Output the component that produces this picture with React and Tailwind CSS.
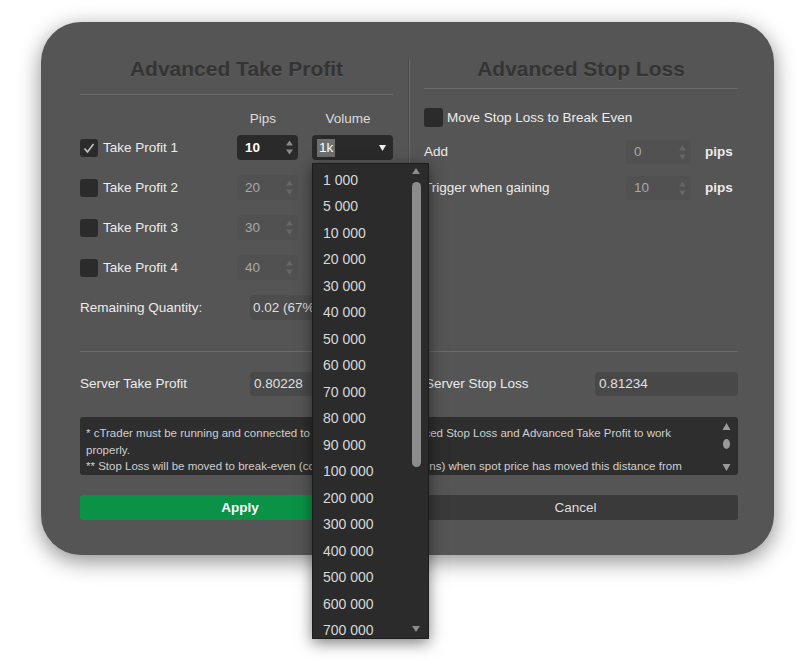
const volumes = [
  "1 000", "5 000", "10 000", "20 000", "30 000", "40 000", "50 000", "60 000", "70 000",
  "80 000", "90 000", "100 000", "200 000", "300 000", "400 000", "500 000", "600 000", "700 000",
]

function Check({ checked, size = 18 }) {
  return (
    <div className="shrink-0 rounded-[3px] bg-[#2b2b2b] flex items-center justify-center"
         style={{ width: size, height: size }}>
      {checked && (
        <svg width="12" height="12" viewBox="0 0 12 12">
          <polyline points="1.5,6.5 4.5,10 10.5,2" fill="none" stroke="#c4c4c4" strokeWidth="1.6" />
        </svg>
      )}
    </div>
  )
}

function Spinner({ color }) {
  return (
    <svg width="7" height="15" viewBox="0 0 7 15" className="shrink-0">
      <polygon points="0,5.5 3.5,0.5 7,5.5" fill={color} />
      <polygon points="0,9.5 3.5,14.5 7,9.5" fill={color} />
    </svg>
  )
}

function NumBox({ value, active, width = "w-[61px]", height = "h-[25px]" }) {
  return (
    <div className={`${width} ${height} rounded-[4px] flex items-center justify-between pl-[8px] pr-[5px] ` +
                    (active ? "bg-[#2a2a2a] text-white font-bold" : "bg-[#515151] text-[#a8a8a8]")}>
      <span className="pt-[1px]">{value}</span>
      <Spinner color={active ? "#8a8a8a" : "#666666"} />
    </div>
  )
}

function TpRow({ n, pips, checked }) {
  return (
    <div className="h-[25px] flex items-center">
      <Check checked={checked} />
      <span className="ml-[5px] pt-[2px] flex-1 text-[#ececec]">Take Profit {n}</span>
      <NumBox value={pips} active={checked} />
      <div className={"ml-[14px] w-[81px] h-[25px] rounded-[4px] flex items-center justify-between pl-[5px] pr-[7px] " +
                      (checked ? "bg-[#2a2a2a]" : "bg-[#515151]")}>
        {checked && (
          <>
            <span className="bg-[#6e6e6e] text-white px-[2px] leading-[18px]">1k</span>
            <svg width="7" height="6" viewBox="0 0 7 6"><polygon points="0,0 7,0 3.5,6" fill="#f0f0f0" /></svg>
          </>
        )}
      </div>
    </div>
  )
}

function Title({ children }) {
  return (
    <div className="h-[24px] leading-[24px] text-center text-[21px] font-bold text-[#343434] [text-shadow:0_1px_0_rgba(255,255,255,0.08)]">
      {children}
    </div>
  )
}

export default function App() {
  return (
    <div className="relative w-[812px] h-[661px] overflow-hidden bg-white pt-[22px] pl-[41px] text-[13.5px] font-['Liberation_Sans',Arial,sans-serif]">
      <div className="w-[733px] h-[533px] rounded-[40px] bg-[#555555] shadow-[0_6px_22px_rgba(0,0,0,0.45)] pl-[39px] pr-[36px] flex flex-col">
        <div className="flex h-[329px]">
          {/* left: take profit */}
          <div className="w-[313px] pt-[35px] flex flex-col">
            <Title>Advanced Take Profit</Title>
            <div className="mt-[13px] h-px bg-[#6a6a6a]" />
            <div className="mt-[17px] h-[14px] flex items-center text-[#dcdcdc]">
              <div className="flex-1" />
              <div className="w-[61px] pr-[9px] text-center">Pips</div>
              <div className="ml-[14px] w-[81px] pr-[9px] text-center">Volume</div>
            </div>
            <div className="mt-[9px] flex flex-col gap-[15px]">
              <TpRow n={1} pips="10" checked />
              <TpRow n={2} pips="20" />
              <TpRow n={3} pips="30" />
              <TpRow n={4} pips="40" />
              <div className="h-[25px] flex items-center">
                <span className="flex-1 pt-[2px] text-[#ececec]">Remaining Quantity:</span>
                <div className="w-[143px] h-[25px] rounded-[4px] bg-[#4d4d4d] text-[#dedede] flex items-center pl-[3px] pt-[1px]">
                  0.02 (67%)
                </div>
              </div>
            </div>
          </div>

          <div className="ml-[15px] mr-[14px] mt-[36px] w-[2px] border-l border-[#4b4b4b] bg-[#676767]" />

          {/* right: stop loss */}
          <div className="w-[314px] pt-[35px] flex flex-col">
            <Title>Advanced Stop Loss</Title>
            <div className="mt-[7px] h-px bg-[#6a6a6a]" />
            <div className="mt-[19px] h-[19px] flex items-center">
              <Check size={19} />
              <span className="ml-[4px] pt-[2px] text-[#ececec]">Move Stop Loss to Break Even</span>
            </div>
            <div className="mt-[13px] h-[24px] flex items-center">
              <span className="w-[202px] pt-[1px] text-[#ececec]">Add</span>
              <NumBox value="0" width="w-[65px]" height="h-[24px]" />
              <span className="ml-[14px] pt-[1px] text-[#ececec] font-bold">pips</span>
            </div>
            <div className="mt-[12px] h-[24px] flex items-center">
              <span className="w-[202px] pt-[1px] text-[#ececec]">Trigger when gaining</span>
              <NumBox value="10" width="w-[65px]" height="h-[24px]" />
              <span className="ml-[14px] pt-[1px] text-[#ececec] font-bold">pips</span>
            </div>
          </div>
        </div>

        <div className="h-px bg-[#6a6a6a]" />

        <div className="mt-[20px] h-[24px] flex items-center">
          <div className="w-[313px] flex items-center">
            <span className="flex-1 pt-[1px] text-[#ececec]">Server Take Profit</span>
            <div className="w-[143px] h-[24px] rounded-[4px] bg-[#4a4a4a] text-[#e0e0e0] flex items-center pl-[4px] pt-[1px]">0.80228</div>
          </div>
          <div className="ml-[32px] flex-1 flex items-center">
            <span className="flex-1 pt-[1px] text-[#ececec]">Server Stop Loss</span>
            <div className="w-[143px] h-[24px] rounded-[4px] bg-[#484848] text-[#e0e0e0] flex items-center pl-[4px] pt-[1px]">0.81234</div>
          </div>
        </div>

        <div className="mt-[21px] h-[58px] rounded-[3px] bg-[#2e2e2e] flex pl-[6px] pr-[7px] pt-[8px] overflow-hidden">
          <div className="flex-1 text-[11.5px] leading-[16.5px] text-[#cfcfcf] whitespace-nowrap overflow-hidden">
            <div>* cTrader must be running and connected to the account for Advanced Stop Loss and Advanced Take Profit to work</div>
            <div>properly.</div>
            <div>** Stop Loss will be moved to break-even (covering your commissions) when spot price has moved this distance from</div>
          </div>
          <svg width="9" height="50" viewBox="0 0 9 50" className="shrink-0 mt-[-3px]">
            <polygon points="0.5,8 4.5,1 8.5,8" fill="#9a9a9a" />
            <ellipse cx="4.5" cy="22" rx="3.5" ry="5" fill="#9a9a9a" />
            <polygon points="0.5,42 4.5,49 8.5,42" fill="#9a9a9a" />
          </svg>
        </div>

        <div className="mt-[20px] h-[25px] flex">
          <div className="w-[320px] rounded-[3px] bg-[#0a9246] text-white font-bold flex items-center justify-center pt-[1px]">Apply</div>
          <div className="ml-[13px] flex-1 rounded-[3px] bg-[#3a3a3a] text-[#dedede] flex items-center justify-center pt-[1px]">Cancel</div>
        </div>
      </div>

      {/* open volume dropdown */}
      <div className="absolute left-[312px] top-[163px] w-[117px] h-[476px] bg-[#2b2b2b] border border-[#1d1d1d] shadow-[0_4px_14px_rgba(0,0,0,0.5)] overflow-hidden flex">
        <div className="flex-1 pt-[3px]">
          {volumes.map(v => (
            <div key={v} className="h-[26.5px] flex items-center pl-[10px] text-[14px] text-[#d8d8d8]">{v}</div>
          ))}
        </div>
        <div className="w-[14px] mr-[5px] flex flex-col items-center pt-[4px]">
          <svg width="8" height="6" viewBox="0 0 8 6"><polygon points="0,6 4,0 8,6" fill="#8c8c8c" /></svg>
          <div className="mt-[8px] w-[9px] h-[285px] rounded-full bg-[#8c8c8c]" />
          <div className="flex-1" />
          <svg width="8" height="6" viewBox="0 0 8 6" className="mb-[6px]"><polygon points="0,0 8,0 4,6" fill="#8c8c8c" /></svg>
        </div>
      </div>
    </div>
  )
}
